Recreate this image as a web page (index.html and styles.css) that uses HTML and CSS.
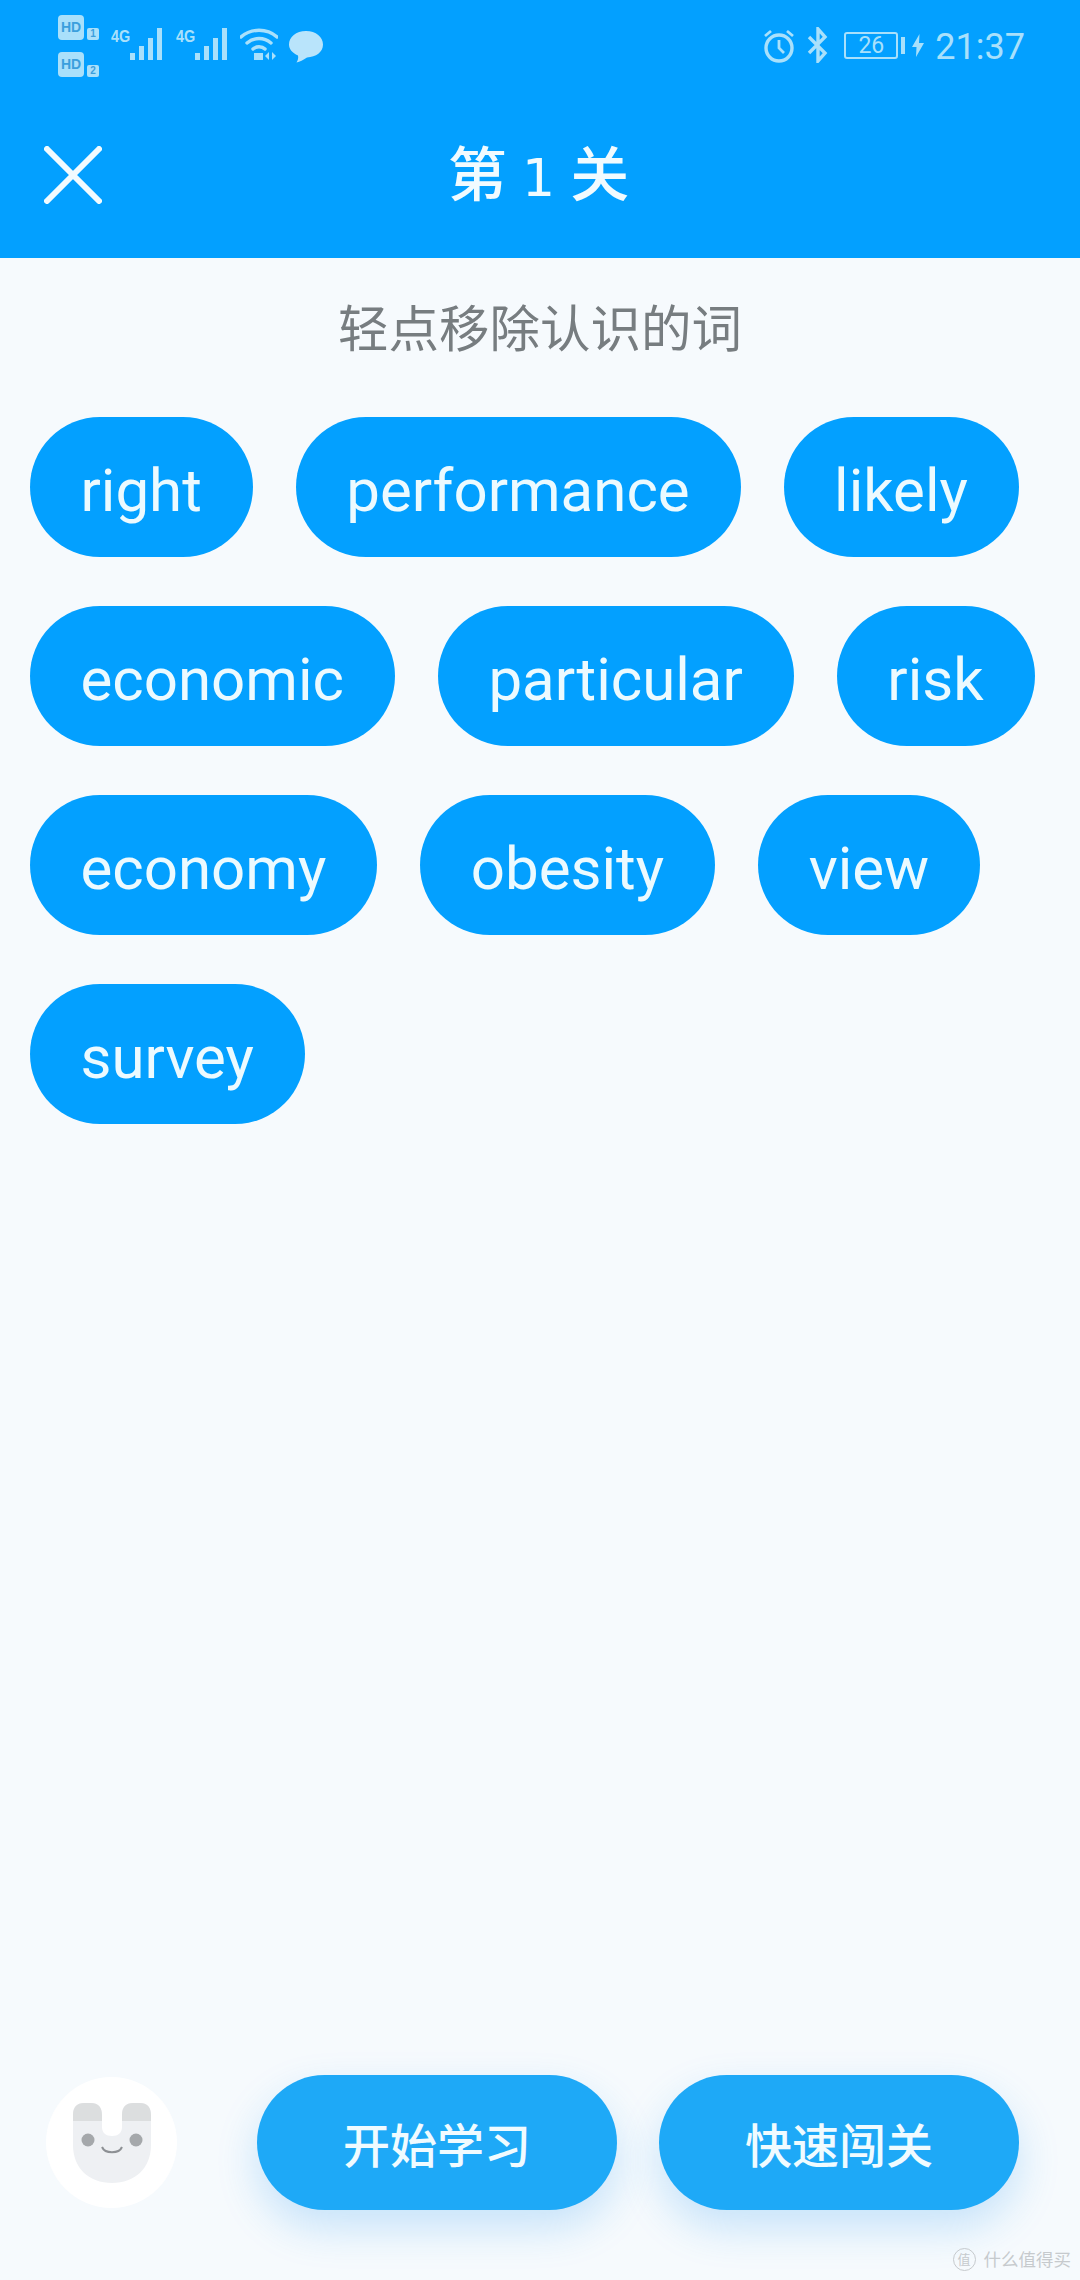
FILE: index.html
```html
<!DOCTYPE html>
<html lang="zh">
<head>
<meta charset="utf-8">
<title>第 1 关</title>
<link rel="stylesheet" href="styles.css">
</head>
<body>
<div class="app">
  <header class="header">
    <div class="status">
      <div class="status-left">
        <div class="hd-col">
          <div class="hd-row"><span class="hd">HD</span><span class="sim">1</span></div>
          <div class="hd-row"><span class="hd">HD</span><span class="sim">2</span></div>
        </div>
        <div class="net">
          <span class="net-label">4G</span>
          <svg class="bars" width="35" height="32" viewBox="0 0 35 32"><rect x="1" y="25" width="5" height="7"/><rect x="10" y="18" width="5" height="14"/><rect x="19" y="10" width="5" height="22"/><rect x="28" y="0" width="5" height="32"/></svg>
        </div>
        <div class="net">
          <span class="net-label">4G</span>
          <svg class="bars" width="35" height="32" viewBox="0 0 35 32"><rect x="1" y="25" width="5" height="7"/><rect x="10" y="18" width="5" height="14"/><rect x="19" y="10" width="5" height="22"/><rect x="28" y="0" width="5" height="32"/></svg>
        </div>
        <svg class="wifi" width="38" height="32" viewBox="0 0 38 32"><path d="M1 9C11 0 27 0 37 9M7 15C14 9 24 9 31 15M13 21C16 18 22 18 25 21" fill="none" stroke="#a9e0fb" stroke-width="3.4" stroke-linecap="round"/><rect x="14" y="25" width="9" height="7" fill="#a9e0fb"/><path d="M29 24l-4 4 4 4zM32 24l4 4-4 4z" fill="#a9e0fb"/></svg>
        <svg class="bubble" width="36" height="33" viewBox="0 0 36 33"><path d="M18 1C28 1 35 7 35 14.500S28 27 19 27.500C15 30 12 32 8.500 32.500C10 30 10.500 28 10 25.500C4 23 1 19 1 14.500C1 7 8 1 18 1Z" fill="#b9e4fb"/></svg>
      </div>
      <div class="status-right">
        <svg class="alarm" width="32" height="34" viewBox="0 0 32 34"><circle cx="16" cy="19" r="13" fill="none" stroke="#a9e0fb" stroke-width="3.400"/><path d="M16 11v8l5 5M2 7l6-5M30 7l-6-5" fill="none" stroke="#a9e0fb" stroke-width="2.800"/></svg>
        <svg class="bt" width="21" height="36" viewBox="0 0 21 36"><path d="M2 10l16 16-7 8V2l7 8L2 26" fill="none" stroke="#a9e0fb" stroke-width="3.400"/></svg>
        <div class="battery"><span class="battery-box">26</span><span class="battery-nub"></span></div>
        <svg class="bolt" width="12" height="23" viewBox="0 0 12 23"><path d="M7.500 0L0 13h4.500L4 23l8-14H7z" fill="#a9e0fb"/></svg>
        <span class="time">21:37</span>
      </div>
    </div>
    <div class="toolbar">
      <svg class="close" width="58" height="58" viewBox="0 0 58 58"><path d="M3 3L55 55M55 3L3 55" stroke="#f1fbff" stroke-width="6" stroke-linecap="round"/></svg>
      <h1 class="title">第 <span class="title-num">1</span> 关</h1>
    </div>
  </header>

  <p class="hint">轻点移除认识的词</p>

  <div class="chips">
    <span class="chip">right</span>
    <span class="chip">performance</span>
    <span class="chip">likely</span>
    <span class="chip">economic</span>
    <span class="chip">particular</span>
    <span class="chip">risk</span>
    <span class="chip">economy</span>
    <span class="chip">obesity</span>
    <span class="chip">view</span>
    <span class="chip">survey</span>
  </div>

  <div class="bottom">
    <div class="avatar">
      <svg width="78" height="80" viewBox="0 0 78 80"><path d="M0 12C0 4 4 0 11 0H18C25 0 29 4 29 12V24C29 30 33 33 39 33S49 30 49 24V12C49 4 53 0 60 0H67C74 0 78 4 78 12V42C78 65 62 80 39 80S0 65 0 42Z" fill="#eef0f3"/><path d="M0 18V12C0 4 4 0 11 0H18C25 0 29 4 29 12V18ZM49 18V12C49 4 53 0 60 0H67C74 0 78 4 78 12V18Z" fill="#dcdedf"/><circle cx="15" cy="37" r="6.500" fill="#a5a8ab"/><circle cx="63" cy="37" r="6.500" fill="#a5a8ab"/><path d="M29 44C32 51 46 51 49 44" fill="none" stroke="#8d9094" stroke-width="2"/></svg>
    </div>
    <div class="actions">
      <button class="action">开始学习</button>
      <button class="action">快速闯关</button>
    </div>
  </div>

  <div class="watermark"><span class="wm-logo">值</span><span>什么值得买</span></div>
</div>
</body>
</html>
```
FILE: styles.css
```css
* { box-sizing: border-box; }
html, body { margin: 0; padding: 0; }
body { width: 1080px; height: 2280px; background: #f6fafd; font-family: Roboto, "Noto Sans CJK SC", sans-serif; overflow: hidden; }
.app { position: relative; display: flex; flex-direction: column; width: 1080px; height: 2280px; }

.header { height: 258px; background: #03a0ff; display: flex; flex-direction: column; }
.status { height: 90px; display: flex; justify-content: space-between; padding: 15px 55px 0 58px; color: #a9e0fb; }
.status-left { display: flex; align-items: flex-start; }
.hd-col { display: flex; flex-direction: column; gap: 12px; margin-right: 12px; }
.hd-row { display: flex; align-items: flex-end; gap: 3px; height: 25px; }
.hd { width: 26px; height: 25px; border-radius: 4px; background: #a9e0fb; color: #3b9fdd; font: 700 14px/25px "Liberation Sans", sans-serif; text-align: center; }
.sim { width: 12px; height: 12px; border-radius: 2px; background: #a9e0fb; color: #3b9fdd; font: 700 10px/12px "Liberation Sans", sans-serif; text-align: center; }
.net { display: flex; align-items: flex-start; margin-top: 13px; margin-right: 12px; }
.net-label { width: 18px; font: 700 17px/18px "Liberation Sans", sans-serif; color: #a9e0fb; transform: scaleX(.85); transform-origin: left; }
.bars { fill: #a9e0fb; display: block; }
.wifi { margin-top: 13px; margin-left: -1px; margin-right: 10px; }
.bubble { margin-top: 15px; }
.status-right { display: flex; align-items: flex-start; }
.alarm { margin-top: 14px; margin-right: 12px; }
.bt { margin-top: 12px; margin-right: 16px; }
.battery { display: flex; align-items: center; margin-top: 17px; gap: 3px; margin-right: 7px; }
.battery-box { width: 54px; height: 27px; border: 2px solid #a9e0fb; border-radius: 3px; font: 400 23px/23px Roboto, sans-serif; text-align: center; color: #a9e0fb; }
.battery-nub { width: 4px; height: 17px; background: #a9e0fb; }
.bolt { margin-top: 19px; margin-right: 11px; }
.time { font: 400 36px/46px Roboto, sans-serif; color: #a9e0fb; margin-top: 9px; }

.toolbar { position: relative; flex: 1; display: flex; align-items: center; justify-content: center; padding-top: 1px; padding-right: 3px; }
.close { position: absolute; left: 44px; top: 56px; }
.title { margin: 0; font: 500 59px/70px "Noto Sans CJK SC", Roboto, sans-serif; color: #f1fbff; word-spacing: 2px; }
.title-num { font-family: "DejaVu Sans", sans-serif; font-size: 52px; font-weight: 400; }

.hint { margin: 37px 0 0; height: 60px; font: 400 50.500px/60px "Noto Sans CJK SC", sans-serif; color: #777d80; text-align: center; }

.chips { display: flex; flex-wrap: wrap; gap: 49px 43px; padding: 62px 30px 0; }
.chip { height: 140px; padding: 7px 51px 0 50.500px; border-radius: 70px; background: #03a0ff; color: #ecfaff; font: 400 60px/133px Roboto, sans-serif; }

.bottom { margin-top: auto; display: flex; align-items: center; justify-content: space-between; padding: 0 61px 70px 46px; }
.avatar { width: 131px; height: 131px; border-radius: 50%; background: #fff; display: flex; align-items: center; justify-content: center; }
.actions { display: flex; gap: 42px; }
.action { width: 360px; height: 135px; border: 0; border-radius: 68px; background: #1ea9f7; color: #f0fbff; font: 500 47px/135px "Noto Sans CJK SC", sans-serif; padding: 0; box-shadow: 0 18px 40px rgba(30, 150, 240, .22); }

.watermark { position: absolute; right: 9px; bottom: 9px; display: flex; align-items: center; gap: 8px; font: 400 17.5px/24px "Noto Sans CJK SC", sans-serif; color: #c6cacd; }
.wm-logo { width: 23px; height: 23px; border: 1.500px solid #c6cacd; border-radius: 50%; font-size: 13px; line-height: 20px; text-align: center; }
```
